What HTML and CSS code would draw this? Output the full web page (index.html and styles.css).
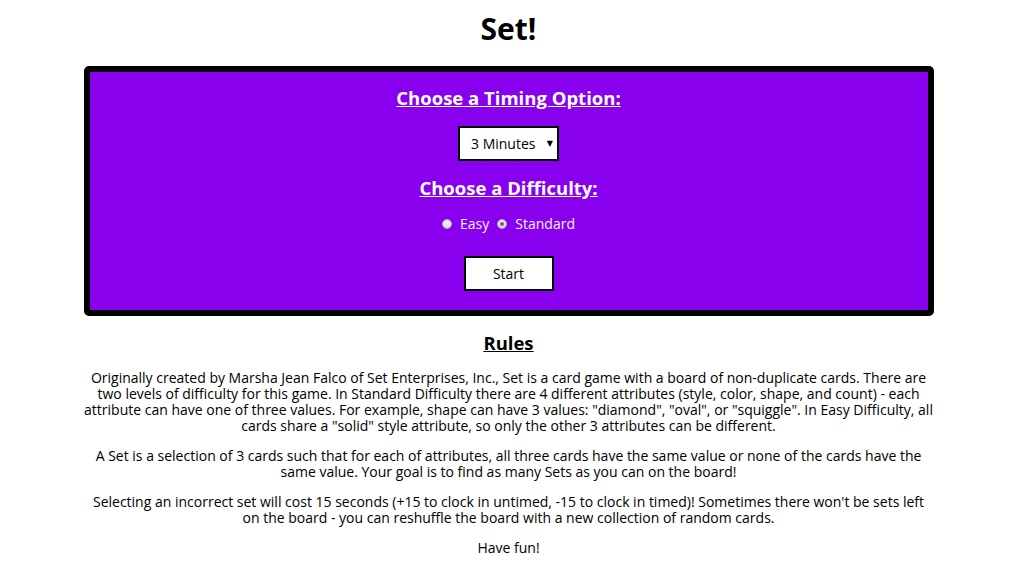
FILE: index.html
```html
<!DOCTYPE html>
<html>
<head>
<meta charset="utf-8">
<title>Set!</title>
<link rel="stylesheet" href="styles.css">
</head>
<body>
<h1 class="title">Set!</h1>
<div class="panel">
  <h3 class="panel-heading">Choose a Timing Option:</h3>
  <div class="select-wrap">
    <select class="timing">
      <option>3 Minutes</option>
      <option>5 Minutes</option>
      <option>Untimed</option>
    </select>
    <span class="select-arrow">▼</span>
  </div>
  <h3 class="panel-heading">Choose a Difficulty:</h3>
  <div class="radios">
    <label class="radio-label"><input type="radio" name="diff" class="radio">Easy</label>
    <label class="radio-label"><input type="radio" name="diff" class="radio" checked>Standard</label>
  </div>
  <button class="start">Start</button>
</div>
<div class="rules">
  <h3 class="rules-heading">Rules</h3>
  <p class="para">Originally created by Marsha Jean Falco of Set Enterprises, Inc., Set is a card game with a board of non-duplicate cards. There are two levels of difficulty for this game. In Standard Difficulty there are 4 different attributes (style, color, shape, and count) - each attribute can have one of three values. For example, shape can have 3 values: "diamond", "oval", or "squiggle". In Easy Difficulty, all cards share a "solid" style attribute, so only the other 3 attributes can be different.</p>
  <p class="para">A Set is a selection of 3 cards such that for each of attributes, all three cards have the same value or none of the cards have the same value. Your goal is to find as many Sets as you can on the board!</p>
  <p class="para">Selecting an incorrect set will cost 15 seconds (+15 to clock in untimed, -15 to clock in timed)! Sometimes there won't be sets left on the board - you can reshuffle the board with a new collection of random cards.</p>
  <p class="para">Have fun!</p>
</div>
</body>
</html>
```

FILE: styles.css
```css
* { box-sizing: border-box; }
body {
  margin: 0;
  font-family: "Open Sans", "DejaVu Sans", sans-serif;
  color: #000;
  background: #fff;
}
.title {
  margin: 10px 0 19px;
  font-size: 30px;
  line-height: 37px;
  font-weight: 700;
  text-align: center;
}
.panel {
  width: 850px;
  margin: 0 auto;
  background: #8800ee;
  border: 6px solid #000;
  border-radius: 5px;
  padding: 15px 0 19px;
  display: flex;
  flex-direction: column;
  align-items: center;
  color: #fff;
}
.panel-heading {
  margin: 0;
  font-size: 18.5px;
  line-height: 22px;
  font-weight: 700;
  text-decoration: underline;
}
.select-wrap {
  position: relative;
  margin: 17px 0 16px;
  width: 101px;
  height: 35px;
}
.timing {
  appearance: none;
  -webkit-appearance: none;
  width: 101px;
  height: 35px;
  border: 2px solid #000;
  border-radius: 0;
  background: #fff;
  color: #000;
  font-family: "Open Sans", sans-serif;
  font-size: 14px;
  padding: 0 0 0 11px;
  margin: 0;
}
.select-arrow {
  position: absolute;
  right: 6px;
  top: 12px;
  font-size: 8px;
  line-height: 10px;
  color: #000;
  pointer-events: none;
}
.radios {
  margin-top: 16px;
  display: flex;
  align-items: center;
  gap: 8px;
  font-size: 14px;
  line-height: 17px;
}
.radio-label {
  display: flex;
  align-items: center;
  gap: 8px;
  color: #f6eeff;
}
.radio {
  appearance: none;
  -webkit-appearance: none;
  width: 10px;
  height: 10px;
  margin: 0;
  border-radius: 50%;
  border: 1px solid #b8b8b8;
  background: radial-gradient(circle at 50% 40%, #f4f4f4, #cfcfcf);
  position: relative;
}
.radio:checked::after {
  content: "";
  position: absolute;
  left: 2px;
  top: 2px;
  width: 4px;
  height: 4px;
  border-radius: 50%;
  background: #6e6e6e;
}
.start {
  margin-top: 24px;
  width: 90px;
  height: 35px;
  border: 2px solid #000;
  border-radius: 0;
  background: #fff;
  color: #000;
  font-family: "Open Sans", sans-serif;
  font-size: 14px;
  padding: 0;
}
.rules {
  width: 850px;
  margin: 16px auto 0;
  text-align: center;
}
.rules-heading {
  margin: 0 0 16px;
  font-size: 18.5px;
  line-height: 22px;
  font-weight: 700;
  text-decoration: underline;
}
.para {
  margin: 0 0 14px;
  font-size: 14px;
  line-height: 16px;
}
```
